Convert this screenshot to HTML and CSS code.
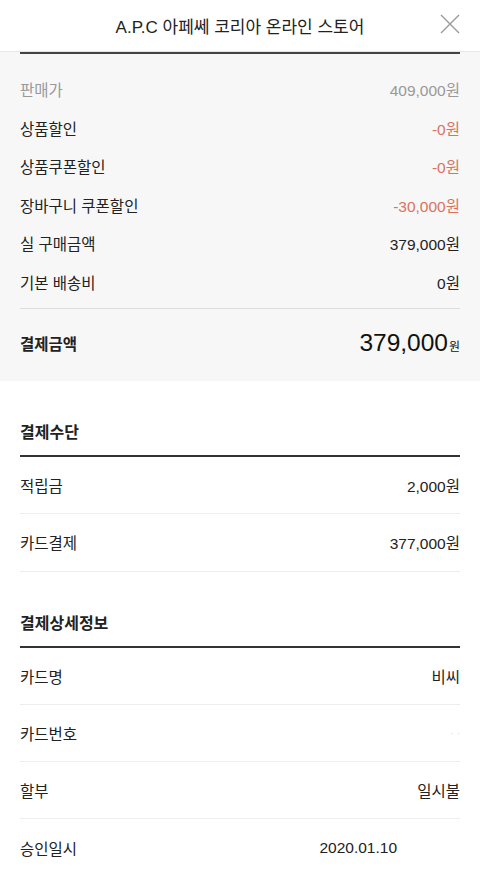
FILE: index.html
```html
<html lang="ko">
<head>
    <meta charset="UTF-8">
    <meta name="viewport" content="width=device-width, initial-scale=1.0">
    <title>결제내역</title>
    <link rel="stylesheet" href="styles.css">
</head>
<body>

    <div class="header">
        <div class="headerTitle">A.P.C 아페쎄 코리아 온라인 스토어</div>
        <div class="closeBtn">
            <svg width="20" height="20" viewBox="0 0 20 20">
                <path d="M1 1 L19 19 M19 1 L1 19" stroke="#9a9a9a" stroke-width="1.4" fill="none"/>
            </svg>
        </div>
    </div>

    <div class="summary">
        <div class="summaryInner">
            <div class="sumRow muted"><span>판매가</span><span>409,000원</span></div>
            <div class="sumRow"><span>상품할인</span><span class="minus">-0원</span></div>
            <div class="sumRow"><span>상품쿠폰할인</span><span class="minus">-0원</span></div>
            <div class="sumRow"><span>장바구니 쿠폰할인</span><span class="minus">-30,000원</span></div>
            <div class="sumRow"><span>실 구매금액</span><span>379,000원</span></div>
            <div class="sumRow"><span>기본 배송비</span><span>0원</span></div>
            <div class="totalRow">
                <span class="totalLabel">결제금액</span>
                <span class="totalPrice">379,000<small>원</small></span>
            </div>
        </div>
    </div>

    <div class="section">
        <div class="sectionTitle">결제수단</div>
        <div class="row"><span>적립금</span><span>2,000원</span></div>
        <div class="row"><span>카드결제</span><span>377,000원</span></div>
    </div>

    <div class="section">
        <div class="sectionTitle">결제상세정보</div>
        <div class="row"><span>카드명</span><span>비씨</span></div>
        <div class="row"><span>카드번호</span><span class="faint">· ·</span></div>
        <div class="row"><span>할부</span><span>일시불</span></div>
        <div class="row last"><span>승인일시</span><span class="date">2020.01.10</span></div>
    </div>

</body>
</html>
```

FILE: styles.css
```css
body{
    margin: 0;
    background-color: white;
    color: #222;
    font-family: "Liberation Sans", "Noto Sans CJK KR", sans-serif;
    font-size: 15.5px;
}

.header{
    height: 52px;
    display: flex;
    align-items: center;
    justify-content: center;
    position: relative;
    border-bottom: 1px solid #e6e6e6;
    box-sizing: border-box;
}

.headerTitle{
    font-size: 17px;
    color: #222;
}

.closeBtn{
    position: absolute;
    right: 20px;
    top: 14px;
    width: 20px;
    height: 20px;
}

.summary{
    background-color: #f7f7f7;
    padding: 0 20px;
}

.summaryInner{
    border-top: 2px solid #444;
    padding-top: 16px;
}

.sumRow{
    display: flex;
    justify-content: space-between;
    align-items: center;
    height: 38.5px;
}

.sumRow.muted{
    color: #999;
}

.minus{
    color: #d9735f;
}

.totalRow{
    display: flex;
    justify-content: space-between;
    align-items: center;
    margin-top: 7px;
    border-top: 1px solid #ddd;
    box-sizing: border-box;
    height: 73px;
    padding-bottom: 4px;
}

.totalLabel{
    font-weight: bold;
    font-size: 15.5px;
}

.totalPrice{
    font-size: 24.5px;
    color: #111;
}

.totalPrice small{
    font-size: 12px;
    margin-left: 1px;
}

.section{
    padding: 0 20px;
    margin-top: 29px;
}

.sectionTitle{
    height: 45px;
    line-height: 45px;
    font-size: 16px;
    font-weight: bold;
    border-bottom: 2px solid #333;
}

.row{
    display: flex;
    justify-content: space-between;
    align-items: center;
    height: 57.3px;
    border-bottom: 1px solid #eee;
    box-sizing: border-box;
}

.row.last{
    border-bottom: none;
}

.faint{
    color: #ddd;
    font-size: 10px;
}

.date{
    margin-right: 63px;
}
```
